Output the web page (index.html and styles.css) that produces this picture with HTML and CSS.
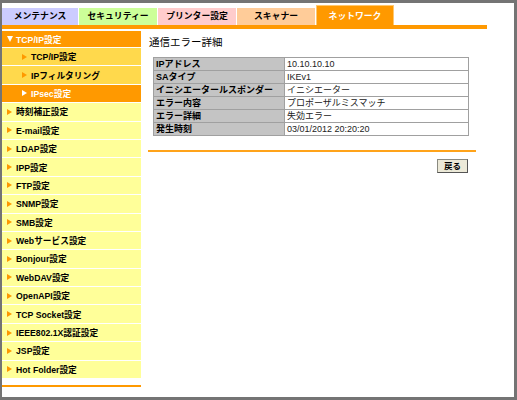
FILE: index.html
```html
<!DOCTYPE html>
<html lang="ja">
<head>
<meta charset="utf-8">
<link rel="stylesheet" href="styles.css">
</head>
<body>
<div class="frame">
  <div class="tabs">
    <div class="tab t1">メンテナンス</div>
    <div class="tab t2">セキュリティー</div>
    <div class="tab t3">プリンター設定</div>
    <div class="tab t4">スキャナー</div>
    <div class="tab t5">ネットワーク</div>
  </div>
  <div class="tabbar"></div>
  <div class="layout">
    <div class="side">
      <div class="menu">
        <div class="row head"><span class="down"></span>TCP/IP設定</div>
        <div class="row sub"><span class="arr"></span>TCP/IP設定</div>
        <div class="row sub"><span class="arr"></span>IPフィルタリング</div>
        <div class="row sub active"><span class="arr"></span>IPsec設定</div>
        <div class="row top"><span class="arr"></span>時刻補正設定</div>
        <div class="row top"><span class="arr"></span>E-mail設定</div>
        <div class="row top"><span class="arr"></span>LDAP設定</div>
        <div class="row top"><span class="arr"></span>IPP設定</div>
        <div class="row top"><span class="arr"></span>FTP設定</div>
        <div class="row top"><span class="arr"></span>SNMP設定</div>
        <div class="row top"><span class="arr"></span>SMB設定</div>
        <div class="row top"><span class="arr"></span>Webサービス設定</div>
        <div class="row top"><span class="arr"></span>Bonjour設定</div>
        <div class="row top"><span class="arr"></span>WebDAV設定</div>
        <div class="row top"><span class="arr"></span>OpenAPI設定</div>
        <div class="row top"><span class="arr"></span>TCP Socket設定</div>
        <div class="row top"><span class="arr"></span>IEEE802.1X認証設定</div>
        <div class="row top"><span class="arr"></span>JSP設定</div>
        <div class="row top"><span class="arr"></span>Hot Folder設定</div>
      </div>
      <div class="sideline"></div>
    </div>
    <div class="content">
      <div class="title">通信エラー詳細</div>
      <table class="info">
        <tr><th>IPアドレス</th><td>10.10.10.10</td></tr>
        <tr><th>SAタイプ</th><td>IKEv1</td></tr>
        <tr><th>イニシエータールスポンダー</th><td>イニシエーター</td></tr>
        <tr><th>エラー内容</th><td>プロポーザルミスマッチ</td></tr>
        <tr><th>エラー詳細</th><td>失効エラー</td></tr>
        <tr><th>発生時刻</th><td>03/01/2012 20:20:20</td></tr>
      </table>
      <div class="rule"></div>
      <div class="actions"><button class="btn">戻る</button></div>
    </div>
  </div>
</div>
</body>
</html>
```
FILE: styles.css
```css
html, body {
  margin: 0;
  padding: 0;
  background: #fff;
}
body {
  font-family: "Liberation Sans", "Noto Sans CJK JP", sans-serif;
  color: #000;
}
.frame {
  width: 517px;
  height: 400px;
  box-sizing: border-box;
  border-top: 3px solid #747474;
  border-left: 2px solid #747474;
  border-right: 3px solid #747474;
  border-bottom: 3px solid #747474;
  background: #fff;
  overflow: hidden;
}
.tabs {
  display: flex;
  align-items: flex-end;
  gap: 1px;
  height: 22px;
}
.tab {
  width: 78px;
  height: 17px;
  line-height: 17px;
  box-sizing: border-box;
  text-align: center;
  font-size: 8.8px;
  font-weight: bold;
}
.t1 { width: 76px; background: #ccccff; }
.t2 { background: #ccff99; }
.t3 { background: #ffcccc; }
.t4 { background: #ffcc99; }
.t5 {
  background: #ff9900;
  color: #fff;
  height: 20px;
  padding-top: 3px;
  border: 1px solid #ffc870;
  border-bottom: none;
  line-height: 15px;
}
.tabbar {
  width: 485px;
  height: 3.5px;
  background: #ff9900;
}
.layout {
  display: flex;
  padding-top: 2.5px;
}
.side {
  width: 139px;
  flex: none;
}
.menu {
  display: flex;
  flex-direction: column;
}
.row {
  display: flex;
  align-items: center;
  height: 17.4px;
  border-bottom: 1px solid #fff;
  font-size: 8.7px;
  font-weight: bold;
  box-sizing: content-box;
  white-space: nowrap;
}
.row.head {
  height: 16px;
  background: #ff9900;
  color: #fff;
  padding-left: 5px;
}
.row.sub {
  background: #ffd94c;
  padding-left: 20px;
}
.row.sub.active {
  background: #ff9900;
  color: #fff;
}
.row.top {
  background: #ffff99;
  padding-left: 5px;
}
.arr {
  width: 0;
  height: 0;
  border-left: 5px solid #ff9900;
  border-top: 3px solid transparent;
  border-bottom: 3px solid transparent;
  margin-right: 4px;
}
.active .arr {
  border-left-color: #fff;
}
.down {
  width: 0;
  height: 0;
  border-top: 6px solid #fff;
  border-left: 3.5px solid transparent;
  border-right: 3.5px solid transparent;
  margin-right: 3px;
}
.sideline {
  margin-top: 6px;
  height: 2px;
  background: #ff9900;
}
.content {
  padding-left: 7px;
  width: 328px;
}
.title {
  font-size: 10.5px;
  line-height: 14px;
  padding-top: 4px;
  padding-left: 1px;
}
.info {
  margin-top: 8px;
  margin-left: 5px;
  width: 316px;
  border-collapse: collapse;
  font-size: 9px;
}
.info th, .info td {
  border: 1px solid #a0a0a0;
  height: 12px;
  padding: 0 2px;
  line-height: 12px;
  text-align: left;
  white-space: nowrap;
}
.info th {
  width: 126px;
  background: #c4c4c4;
  font-weight: bold;
}
.info td {
  background: #fff;
  color: #222;
}
.rule {
  margin-top: 14px;
  height: 2px;
  background: #ffa31a;
}
.actions {
  display: flex;
  justify-content: flex-end;
  padding-right: 8px;
  padding-top: 7px;
}
.btn {
  width: 31px;
  height: 14px;
  padding: 0;
  background: #ece9d8;
  border: 1px solid #8a8a80;
  border-right-color: #555;
  border-bottom-color: #555;
  font-family: "Liberation Sans", "Noto Sans CJK JP", sans-serif;
  font-size: 8.5px;
  font-weight: bold;
  line-height: 12px;
  color: #000;
}
```
